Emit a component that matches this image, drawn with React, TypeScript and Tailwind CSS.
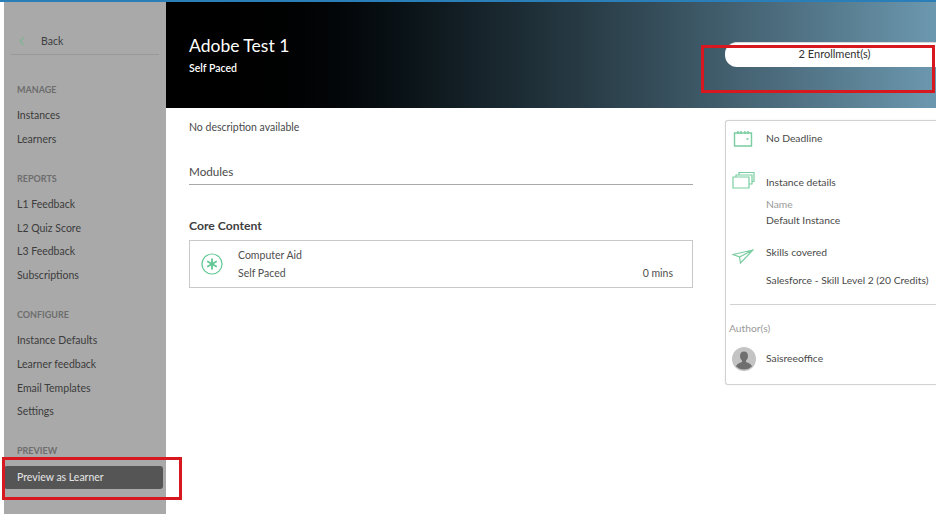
import { Fragment } from 'react';

const FONT = "font-['Lato','Noto_Sans',sans-serif]";

const SECTIONS = [
  { label: 'MANAGE', items: ['Instances', 'Learners'] },
  { label: 'REPORTS', items: ['L1 Feedback', 'L2 Quiz Score', 'L3 Feedback', 'Subscriptions'] },
  { label: 'CONFIGURE', items: ['Instance Defaults', 'Learner feedback', 'Email Templates', 'Settings'] },
];

function Sidebar() {
  return (
    <aside className="w-[162px] ml-1 shrink-0 bg-[#a9a9a9] flex flex-col pt-[29px]">
      <div className="mx-[7px] h-[24px] border-b border-[#989898] flex items-start pl-[7px] text-[10.5px] leading-[20px] text-[#3f3f3f]">
        <svg width="8" height="10" viewBox="0 0 8 10" fill="none" className="mt-[5px] mr-[15px]">
          <path d="M6 1 2 5l4 4" stroke="#7fb592" strokeWidth="1.2" />
        </svg>
        Back
      </div>
      <div className="mt-[27px] pl-[13px] flex flex-col">
        {SECTIONS.map((s) => (
          <Fragment key={s.label}>
            <div className="h-[16px] leading-[16px] text-[9px] font-bold text-[#6d6d6d]">{s.label}</div>
            <div className="mt-[5px] mb-[20.500px] flex flex-col">
              {s.items.map((item) => (
                <div key={item} className="h-[23.7px] leading-[24px] text-[10.5px] text-[#3c3c3c]">
                  {item}
                </div>
              ))}
            </div>
          </Fragment>
        ))}
        <div className="h-[16px] leading-[16px] text-[9px] font-bold text-[#6d6d6d]">PREVIEW</div>
      </div>
      <div className="mt-[7px] mr-[3px] h-[23px] rounded-[3px] bg-[#555555] pl-[13px] leading-[23px] text-[10.5px] text-[#e6e6e6]">
        Preview as Learner
      </div>
    </aside>
  );
}

function Banner() {
  return (
    <header className="h-[106px] bg-gradient-to-r from-[#000000] from-[5%] to-[#6c98af] pl-[23px] pt-[31px] flex relative">
      <div className="text-white">
        <div className="text-[17.500px] leading-[26px]">Adobe Test 1</div>
        <div className="text-[10.5px] leading-[16px] mt-[1px] font-semibold">Self Paced</div>
      </div>
      <div className="absolute left-[559px] right-0 top-[40px] h-[25px] bg-white rounded-l-[12px] border-t border-[#d8d8d8] text-center text-[11px] leading-[22px] text-[#303030]">
        <span className="pl-[8px]">2 Enrollment(s)</span>
      </div>
    </header>
  );
}

function MainColumn() {
  return (
    <section className="w-[504px] shrink-0 ml-[23px] pt-[11px]">
      <div className="text-[10.5px] leading-[16px] text-[#4a4a4a]">No description available</div>
      <div className="mt-[27px] h-[23px] border-b border-[#a8a8a8] text-[11.700px] leading-[18px] text-[#4a4a4a]">Modules</div>
      <div className="mt-[32px] text-[12.200px] leading-[18px] font-bold text-[#404040]">Core Content</div>
      <div className="mt-[5px] h-[48px] border border-[#c9c9c9] flex items-center pl-[11px] pr-[19px]">
        <svg width="22" height="22" viewBox="0 0 22 22" fill="none" className="shrink-0">
          <circle cx="11" cy="11" r="10" stroke="#62c794" strokeWidth="1.2" />
          <path d="M11 5.500v11M6.200 8.200l9.600 5.600M15.800 8.200l-9.600 5.600" stroke="#62c794" strokeWidth="1.8" />
        </svg>
        <div className="ml-[15px] flex-1 text-[10.5px] leading-[18px] text-[#4f4f4f]">
          <div>Computer Aid</div>
          <div className="flex justify-between">
            <span>Self Paced</span>
            <span>0 mins</span>
          </div>
        </div>
      </div>
    </section>
  );
}

function DetailsCard() {
  return (
    <aside className="ml-[32px] mt-[12px] flex-1 h-[265px] rounded-l-[3px] border-y border-l border-[#d2d2d2] pl-[4px] text-[10.300px] text-[#4a4a4a] shadow-[0_0_2px_rgba(0,0,0,0.08)]">
      <div className="flex items-start pt-[9px] pl-[3px] h-[48px]">
        <svg width="20" height="18" viewBox="0 0 20 18" fill="none" className="shrink-0">
          <path d="M1.500 3h17v13h-17zM5 1v3M8 1v3M12 1v3M15 1v3" stroke="#79cda0" strokeWidth="1.400" />
          <path d="M13.500 9h2" stroke="#79cda0" strokeWidth="1.600" />
        </svg>
        <span className="ml-[13px] leading-[16px]">No Deadline</span>
      </div>
      <div className="flex items-start h-[40px] pl-[2px]">
        <svg width="23" height="18" viewBox="0 0 23 18" fill="none" className="shrink-0 mt-[2px]">
          <path d="M1 6h16v11H1zM4 6V4h16v9h-3M7 4V1.500h15v9h-2" stroke="#79cda0" strokeWidth="1.200" />
        </svg>
        <span className="ml-[11px] leading-[16px] mt-[5px]">Instance details</span>
      </div>
      <div className="pl-[36px] leading-[16px] -mt-[13px]">
        <div className="text-[#9a9a9a]">Name</div>
        <div>Default Instance</div>
      </div>
      <div className="flex items-start pl-[2px] mt-[16px]">
        <svg width="22" height="15" viewBox="0 0 22 15" fill="none" className="shrink-0 mt-[5px]">
          <path d="M1 5.500 21 1 8.500 14l-1-6zM7.500 8 21 1" stroke="#79cda0" strokeWidth="1.200" />
        </svg>
        <div className="ml-[12px] leading-[16px]">
          <div>Skills covered</div>
          <div className="mt-[12px] whitespace-nowrap">Salesforce - Skill Level 2 (20 Credits)</div>
        </div>
      </div>
      <div className="mt-[16px] border-t border-[#d2d2d2]" />
      <div className="mt-[15px] -ml-[1px] leading-[16px] text-[#9a9a9a]">Author(s)</div>
      <div className="mt-[11px] flex items-center pl-[2px]">
        <svg width="24" height="24" viewBox="0 0 24 24" className="shrink-0">
          <circle cx="12" cy="12" r="12" fill="#c4c4c4" />
          <path d="M12 4.500c2.700 0 4 2 4 4.500 0 2-1 3.700-2 4.500v1.500c2 1 5 1.500 6 4.500a12 12 0 0 1-16 0c1-3 4-3.500 6-4.500v-1.500c-1-.8-2-2.500-2-4.500 0-2.500 1.300-4.500 4-4.500z" fill="#6f6f6f" />
        </svg>
        <span className="ml-[10px]">Saisreeoffice</span>
      </div>
    </aside>
  );
}

export default function App() {
  return (
    <div className={`${FONT} relative w-[936px] h-[514px] overflow-hidden bg-white flex flex-col`}>
      <div className="h-[2px] shrink-0 bg-[#2b7fb8]" />
      <div className="flex flex-1 min-h-0">
        <Sidebar />
        <main className="flex-1 min-w-0 flex flex-col">
          <Banner />
          <div className="flex">
            <MainColumn />
            <DetailsCard />
          </div>
        </main>
      </div>
      {/* red annotation boxes drawn over the screenshot */}
      <div className="absolute left-[701px] top-[45px] w-[234px] h-[48px] border-[3px] border-[#d8181f]" />
      <div className="absolute left-[2px] top-[457px] w-[180px] h-[43px] border-[3px] border-[#d8181f]" />
    </div>
  );
}
